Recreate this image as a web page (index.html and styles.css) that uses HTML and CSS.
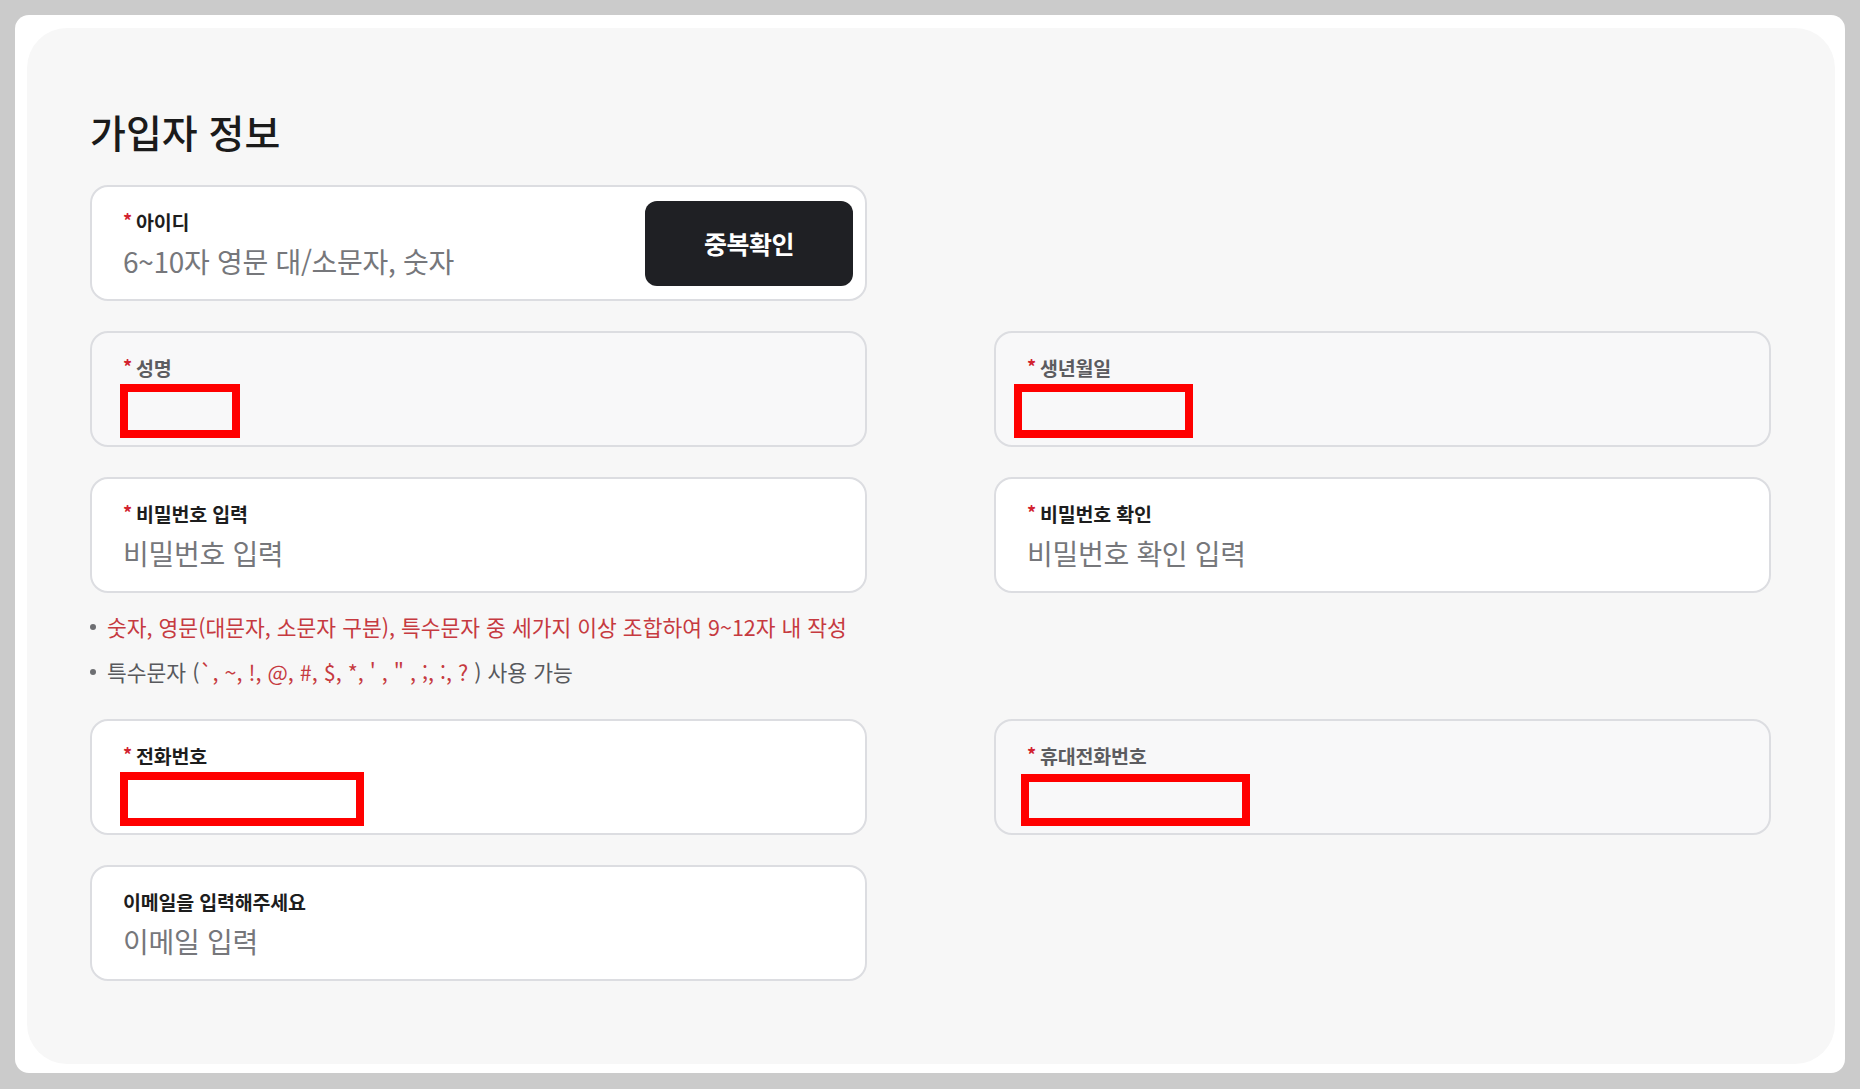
FILE: index.html
```html
<!DOCTYPE html>
<html lang="ko">
<head>
<meta charset="utf-8">
<title>가입자 정보</title>
<link rel="stylesheet" href="styles.css">
</head>
<body>
<div class="frame">
  <main class="panel">
    <h1 class="title">가입자 정보</h1>

    <div class="row">
      <div class="field field--id">
        <div class="field-body">
          <div class="label"><span class="req">*</span>아이디</div>
          <div class="placeholder">6~10자 영문 대/소문자, 숫자</div>
        </div>
        <button class="btn-check" type="button">중복확인</button>
      </div>
    </div>

    <div class="row">
      <div class="field field--disabled">
        <div class="label"><span class="req">*</span>성명</div>
        <div class="redact redact--name"></div>
      </div>
      <div class="field field--disabled">
        <div class="label"><span class="req">*</span>생년월일</div>
        <div class="redact redact--birth"></div>
      </div>
    </div>

    <div class="row row--tight">
      <div class="field">
        <div class="label"><span class="req">*</span>비밀번호 입력</div>
        <div class="placeholder">비밀번호 입력</div>
      </div>
      <div class="field">
        <div class="label"><span class="req">*</span>비밀번호 확인</div>
        <div class="placeholder">비밀번호 확인 입력</div>
      </div>
    </div>

    <ul class="hints">
      <li class="hint hint--warn"><span class="dot"></span>숫자, 영문(대문자, 소문자 구분), 특수문자 중 세가지 이상 조합하여 9~12자 내 작성</li>
      <li class="hint"><span class="dot"></span>특수문자 (<span class="sym">`, ~, !, @, #, $, *, ' , " , ;, :, ?</span> ) 사용 가능</li>
    </ul>

    <div class="row">
      <div class="field">
        <div class="label"><span class="req">*</span>전화번호</div>
        <div class="redact redact--tel"></div>
      </div>
      <div class="field field--disabled">
        <div class="label"><span class="req">*</span>휴대전화번호</div>
        <div class="redact redact--mobile"></div>
      </div>
    </div>

    <div class="row">
      <div class="field">
        <div class="label">이메일을 입력해주세요</div>
        <div class="placeholder">이메일 입력</div>
      </div>
    </div>
  </main>
</div>
</body>
</html>
```

FILE: styles.css
```css
* {
  box-sizing: border-box;
}

html, body {
  margin: 0;
  padding: 0;
}

body {
  width: 1860px;
  height: 1089px;
  padding: 15px 15px 16px 15px;
  background: #cbcbcb;
  font-family: "Noto Sans CJK KR", "Noto Sans", sans-serif;
  color: #222;
  overflow: hidden;
}

.frame {
  height: 100%;
  display: flex;
  flex-direction: column;
  background: #ffffff;
  border-radius: 14px;
  padding: 13px 10px 9px 12px;
}

.panel {
  flex: 1;
  background: #f7f7f7;
  border-radius: 40px;
  padding: 78px 64px 0 63px;
}

.title {
  margin: 0 0 29px 0;
  font-size: 39px;
  line-height: 50px;
  font-weight: 500;
  color: #1b1b1b;
  letter-spacing: 0;
}

.row {
  display: grid;
  grid-template-columns: 777px 777px;
  column-gap: 127px;
  margin-bottom: 30px;
}

.row--tight {
  margin-bottom: 11px;
}

.field {
  height: 116px;
  border: 2px solid #dcdde1;
  border-radius: 18px;
  background: #ffffff;
  padding: 23px 30px 0 31px;
}

.field--disabled {
  background: #f8f8f9;
}

.field--id {
  display: flex;
  align-items: center;
  padding: 0 12px 0 31px;
}

.field--id .field-body {
  flex: 1;
  align-self: stretch;
  padding-top: 23px;
}

.label {
  font-size: 19.5px;
  line-height: 24px;
  font-weight: 700;
  color: #1d1d1d;
  letter-spacing: -0.2px;
  display: flex;
  align-items: center;
}

.field--disabled .label {
  color: #5c5c60;
}

.req {
  color: #d2222f;
  font-size: 18px;
  font-weight: 700;
  margin-right: 4px;
  position: relative;
  top: -2px;
}

.placeholder {
  margin-top: 9px;
  font-size: 28px;
  line-height: 36px;
  font-weight: 400;
  color: #76777b;
  letter-spacing: -0.3px;
}

.btn-check {
  width: 208px;
  height: 85px;
  border: none;
  border-radius: 12px;
  background: #1f2024;
  color: #ffffff;
  font-family: "Noto Sans CJK KR", "Noto Sans", sans-serif;
  font-size: 25px;
  font-weight: 700;
  letter-spacing: -0.5px;
  padding: 0;
  flex-shrink: 0;
}

.redact {
  margin-top: 4px;
  height: 54px;
  border: 8px solid #ff0000;
}

.redact--name {
  width: 120px;
  margin-left: -3px;
}

.redact--birth {
  width: 179px;
  margin-left: -13px;
}

.redact--tel {
  width: 244px;
  margin-left: -3px;
}

.redact--mobile {
  width: 229px;
  margin-left: -6px;
  margin-top: 6px;
  height: 52px;
}

.hints {
  list-style: none;
  margin: 0 0 25px 0;
  padding: 0;
}

.hint {
  display: flex;
  align-items: center;
  font-size: 21.5px;
  line-height: 45px;
  color: #58595d;
  letter-spacing: 0;
  white-space: pre;
}

.hint--warn {
  color: #c63a40;
}

.dot {
  width: 6px;
  height: 6px;
  border-radius: 50%;
  background: #6d6e72;
  margin-right: 11px;
  flex-shrink: 0;
}

.sym {
  color: #c63a40;
}
```
